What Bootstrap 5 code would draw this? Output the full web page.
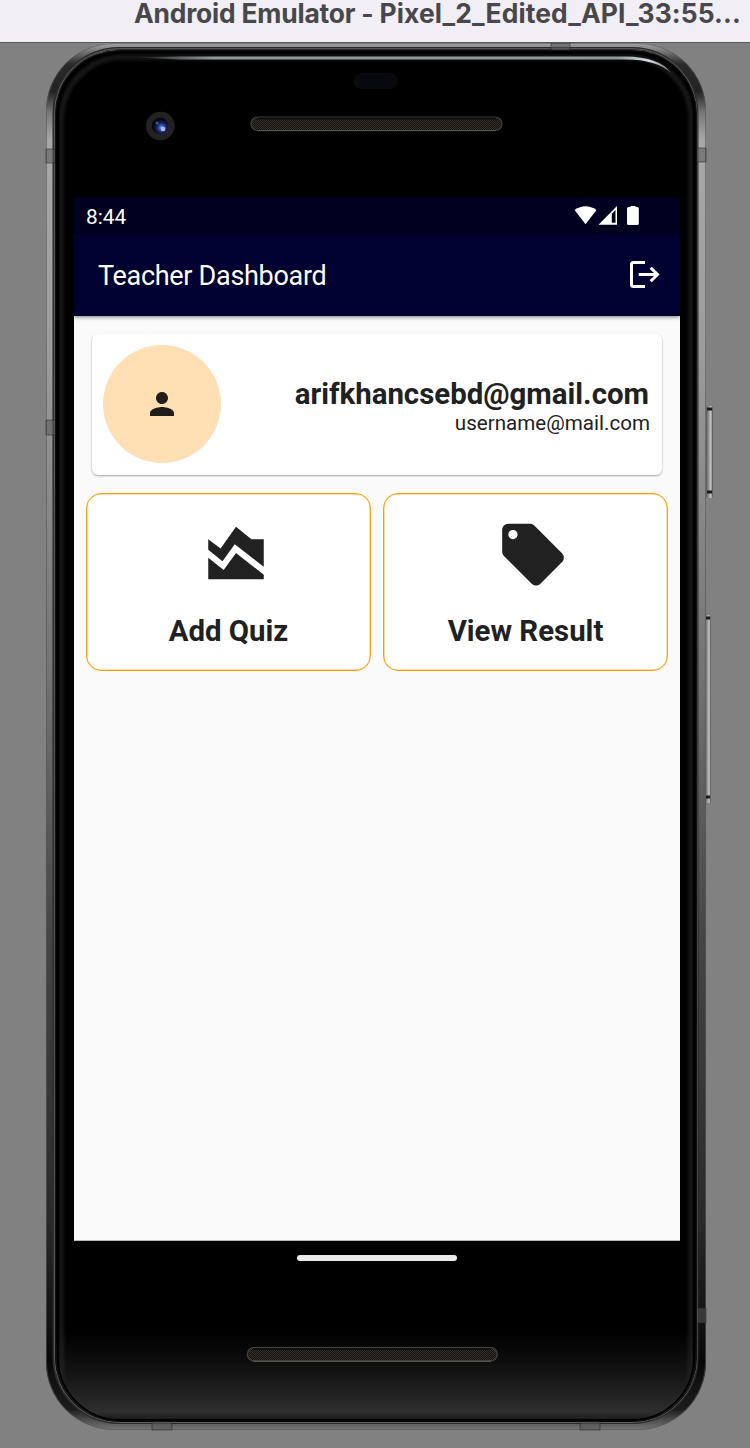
<!DOCTYPE html>
<html lang="en">
<head>
<meta charset="utf-8">
<meta name="viewport" content="width=device-width, initial-scale=1">
<title>Teacher Dashboard</title>
<link href="https://cdn.jsdelivr.net/npm/bootstrap@5.3.0/dist/css/bootstrap.min.css" rel="stylesheet">
<style>
  body { background: #818181; font-family: Roboto, "Liberation Sans", sans-serif; color: #212121; height: 1448px; overflow: hidden; }
  .window-title { height: 43px; margin-bottom: -1px; z-index: 2; background: #f1eef5; border-bottom: 1px solid #59585b; color: #48474a; font: 700 26.4px/26px Inter, sans-serif; padding-left: 134px; white-space: pre; }
  .title-app { letter-spacing: -.2px; }
  .title-device { letter-spacing: .12px; }
  .stage { height: 1406px; padding: 155px 70px 0 74px; }
  .shell { inset: 0; width: 750px; height: 1406px; }
  .app-screen { width: 606px; height: 1044px; background: #fafafa; z-index: 1; border-bottom: 1px solid #bbb; }
  .status-row { height: 37px; background: #000020; color: #fff; padding: 0 40px 0 12px; }
  .clock { font-size: 20.8px; line-height: 40px; }
  .app-bar { height: 82px; background: #000031; color: #fff; padding: 0 20px 0 24px; box-shadow: 0 1px 4px rgba(0,0,0,.5); }
  .app-bar h1 { font-size: 27px; font-weight: 400; line-height: 32px; padding-top: 2px; letter-spacing: -.3px; }
  .profile { margin: 18px 18px 0; height: 141px; border-radius: 6px; background: #fff; box-shadow: 0 1px 2px rgba(0,0,0,.34); padding: 0 13px 0 11.4px; }
  .avatar { width: 118px; height: 118px; margin-bottom: 1px; background: #ffdfb3; }
  .mail-main { font-size: 29.4px; font-weight: 700; line-height: 33px; padding-top: 3px; }
  .mail-sub { font-size: 20.6px; line-height: 24px; margin-right: -1px; }
  .tiles { padding: 18px 12px 0; gap: 12px; }
  .tile { height: 178px; border: 1px solid #ff9f0a; box-shadow: inset 0 0 0 .5px #ffb950; border-radius: 15px; background: #fff; padding-top: 23px; }
  .tile-icon { padding-left: 15px; height: 74px; }
  .tile-label { font-size: 29.4px; font-weight: 700; line-height: 34px; margin-top: 23px; }
  .home-pill { width: 160px; height: 6px; margin: 14px 0 0 223px; background: #ebebeb; z-index: 1; }
</style>
<script src="https://cdn.jsdelivr.net/npm/bootstrap@5.3.0/dist/js/bootstrap.bundle.min.js"></script>
</head>
<body>
<header class="window-title d-flex position-relative"><span class="title-app">Android Emulator - </span><span class="title-device">Pixel_2_Edited_API_33:55...</span></header>
<div class="stage position-relative">
  <!-- phone body -->
  <svg class="shell position-absolute" viewBox="0 42 750 1406" aria-hidden="true">
    <defs>
      <linearGradient id="rim" x1="0" y1="0" x2="0" y2="1">
        <stop offset="0" stop-color="#a5a5a5"/><stop offset=".006" stop-color="#777"/><stop offset=".015" stop-color="#2a2a2a"/><stop offset=".035" stop-color="#222"/><stop offset=".05" stop-color="#777"/><stop offset=".07" stop-color="#a8a8a8"/><stop offset=".22" stop-color="#9c9c9c"/>
        <stop offset=".45" stop-color="#747474"/><stop offset=".65" stop-color="#444"/><stop offset=".85" stop-color="#2a2a2a"/><stop offset=".95" stop-color="#080808"/><stop offset=".985" stop-color="#1c1c1c"/><stop offset=".994" stop-color="#555"/><stop offset="1" stop-color="#777"/>
      </linearGradient>
      <linearGradient id="chin" x1="0" y1="0" x2="0" y2="1">
        <stop offset="0" stop-color="#000"/><stop offset=".935" stop-color="#000"/><stop offset=".965" stop-color="#141414"/><stop offset=".993" stop-color="#2e2e2e"/><stop offset="1" stop-color="#181818"/>
      </linearGradient>
      <linearGradient id="shine"><stop offset="0" stop-color="#9aa5a8" stop-opacity="0"/><stop offset=".15" stop-color="#8f9a9f"/><stop offset=".9" stop-color="#8e989c"/><stop offset=".96" stop-color="#d4dcdd"/><stop offset="1" stop-color="#777"/></linearGradient>
      <linearGradient id="key"><stop offset="0" stop-color="#555"/><stop offset=".35" stop-color="#909090"/><stop offset=".7" stop-color="#c8c8c8"/><stop offset="1" stop-color="#444"/></linearGradient>
      <radialGradient id="lens" cx=".6" cy=".6"><stop offset="0" stop-color="#92a9ff"/><stop offset=".28" stop-color="#3b54b8"/><stop offset=".6" stop-color="#152255"/><stop offset="1" stop-color="#050714"/></radialGradient>
      <pattern id="mesh" width="2" height="2" patternUnits="userSpaceOnUse"><rect width="2" height="2" fill="#14120f"/><path d="M0 .5h1M1 1.5h1" stroke="#35312a"/></pattern>
      <filter id="soft" x="-10%" y="-10%" width="120%" height="120%"><feGaussianBlur stdDeviation="2"/></filter>
      <clipPath id="face"><rect x="57" y="52" width="638" height="1369" rx="63"/></clipPath>
    </defs>
    <rect x="706" y="406" width="7" height="92" rx="2" fill="url(#key)"/>
    <path d="M707 409h5M707 492h5" stroke="#1b1b1b" stroke-width="3"/>
    <rect x="705" y="615" width="6" height="188" rx="2" fill="url(#key)"/>
    <path d="M705 618h5M705 797h5" stroke="#1b1b1b" stroke-width="3"/>
    <rect x="46" y="43" width="660" height="1387" rx="68" fill="url(#rim)"/>
    <rect x="46.500" y="43.500" width="659" height="1386" rx="67.500" fill="none" stroke="#555" stroke-opacity=".6"/>
    <rect x="54" y="48.500" width="643" height="1374" rx="65" fill="none" stroke="#2c2c2c" stroke-width="3"/>
    <rect x="54.500" y="48.500" width="642.500" height="1374" rx="65" fill="none" stroke="#777" stroke-opacity=".6" stroke-width="1"/>
    <path d="M46 149h9v14h-9zM696 148h10v14h-10zM551 43h19v8h-19zM46 420h10v15h-10zM696 1308h10v15h-10zM152 1421h20v9h-20zM580 1421h20v9h-20z" fill="#555" fill-opacity=".55" stroke="#222" stroke-opacity=".5"/>
    <rect x="55.500" y="50.500" width="641" height="1371" rx="64" fill="url(#chin)" stroke="#111"/>
    <g clip-path="url(#face)">
      <rect x="61.500" y="57" width="629.500" height="1390" rx="62" fill="none" stroke="#2a2a2a" stroke-width="3" filter="url(#soft)"/>
      <rect x="57" y="52" width="638" height="1369" rx="63" fill="none" stroke="#000" stroke-width="4"/>
    </g>
    <path d="M134 57.500L180 56.500H625Q660 57 671 73Q657 59.500 625 59.500H180Z" fill="url(#shine)"/>
    <rect x="353.500" y="73" width="44" height="16" rx="8" fill="#08090e"/>
    <circle cx="160.300" cy="126" r="14.300" fill="#242122"/>
    <circle cx="160" cy="126" r="8.300" fill="url(#lens)"/>
    <circle cx="163" cy="129" r="2.300" fill="#a9b9ff"/><circle cx="157" cy="123" r="1.500" fill="#4255a2"/>
    <rect x="251" y="117" width="251" height="13.500" rx="6.700" fill="url(#mesh)" stroke="#3d3d39" stroke-width="1.200"/>
    <path d="M257 118.500h239" stroke="#111" stroke-width="2"/>
    <path d="M257 130.700h239" stroke="#5a5a54"/>
    <rect x="247.300" y="1347.500" width="250" height="13.500" rx="6.700" fill="url(#mesh)" stroke="#44443f" stroke-width="1.200"/>
    <path d="M253 1349h238" stroke="#111" stroke-width="2"/>
    <path d="M253 1361.200h238" stroke="#65655e"/>
  </svg>

  <main class="app-screen position-relative">
    <div class="status-row d-flex justify-content-between">
      <span class="clock">8:44</span>
      <svg width="66" height="37" viewBox="574 197 66 37" fill="#fff" aria-hidden="true">
        <path d="M574.600 210Q585.500 202.500 596.500 210L585.500 224.300Z"/>
        <path d="M598.500 224.700L617 206V224.700Z"/><path d="M611.800 213.700L615.500 210V222.800H611.800Z" fill="#000020"/>
        <path d="M630.500 207v-1h5v1h1.700q1.600 0 1.600 1.600V223.400q0 1.600-1.600 1.600h-8.600q-1.600 0-1.600-1.600V208.600q0-1.600 1.600-1.600Z"/>
      </svg>
    </div>
    <div class="app-bar d-flex align-items-center justify-content-between position-relative">
      <h1 class="m-0">Teacher Dashboard</h1>
      <svg width="31" height="30" viewBox="629 260 31 30" fill="none" stroke="#fff" stroke-width="3" aria-label="Log out">
        <path d="M645 262.500H633.500Q631.500 262.500 631.500 264.500V284.500Q631.500 286.500 633.500 286.500H645M638.700 274.500H657.500M650.700 267.700L657.500 274.500L650.700 281.300"/>
      </svg>
    </div>
    <section class="profile d-flex align-items-center justify-content-between">
      <div class="avatar rounded-circle d-flex align-items-center justify-content-center">
        <svg width="36" height="36" viewBox="0 0 24 24" fill="#211d17" aria-hidden="true"><path d="M12 12c2.210 0 4-1.790 4-4s-1.790-4-4-4-4 1.790-4 4 1.790 4 4 4zm0 2c-2.670 0-8 1.340-8 4v2h16v-2c0-2.660-5.330-4-8-4z"/></svg>
      </div>
      <div class="text-end">
        <div class="mail-main">arifkhancsebd@gmail.com</div>
        <div class="mail-sub">username@mail.com</div>
      </div>
    </section>
    <section class="tiles d-flex">
      <div class="tile flex-fill w-50 text-center">
        <div class="tile-icon d-flex justify-content-center"><svg width="74" height="74" viewBox="0 -.2 24 24" fill="#212121" aria-hidden="true"><path d="M3 13v7h18v-1.500l-9-7L8 17l-5-4zm0-6 4 3 5-7 5 4h4v8.970l-9.400-7.310-3.980 5.480L3 10.440V7z"/></svg></div>
        <div class="tile-label">Add Quiz</div>
      </div>
      <div class="tile flex-fill w-50 text-center">
        <div class="tile-icon d-flex justify-content-center"><svg width="74" height="74" viewBox="0 -.2 24 24" fill="#212121" aria-hidden="true"><path d="M21.410 11.580l-9-9C12.050 2.220 11.550 2 11 2H4c-1.100 0-2 .9-2 2v7c0 .55.22 1.050.59 1.420l9 9c.36.36.86.58 1.410.58.55 0 1.050-.22 1.410-.59l7-7c.37-.36.59-.86.59-1.410 0-.55-.23-1.060-.59-1.420zM5.500 7C4.670 7 4 6.330 4 5.500S4.670 4 5.500 4 7 4.670 7 5.500 6.330 7 5.500 7z"/></svg></div>
        <div class="tile-label">View Result</div>
      </div>
    </section>
  </main>
  <div class="home-pill rounded-pill position-relative"></div>
</div>
</body>
</html>
